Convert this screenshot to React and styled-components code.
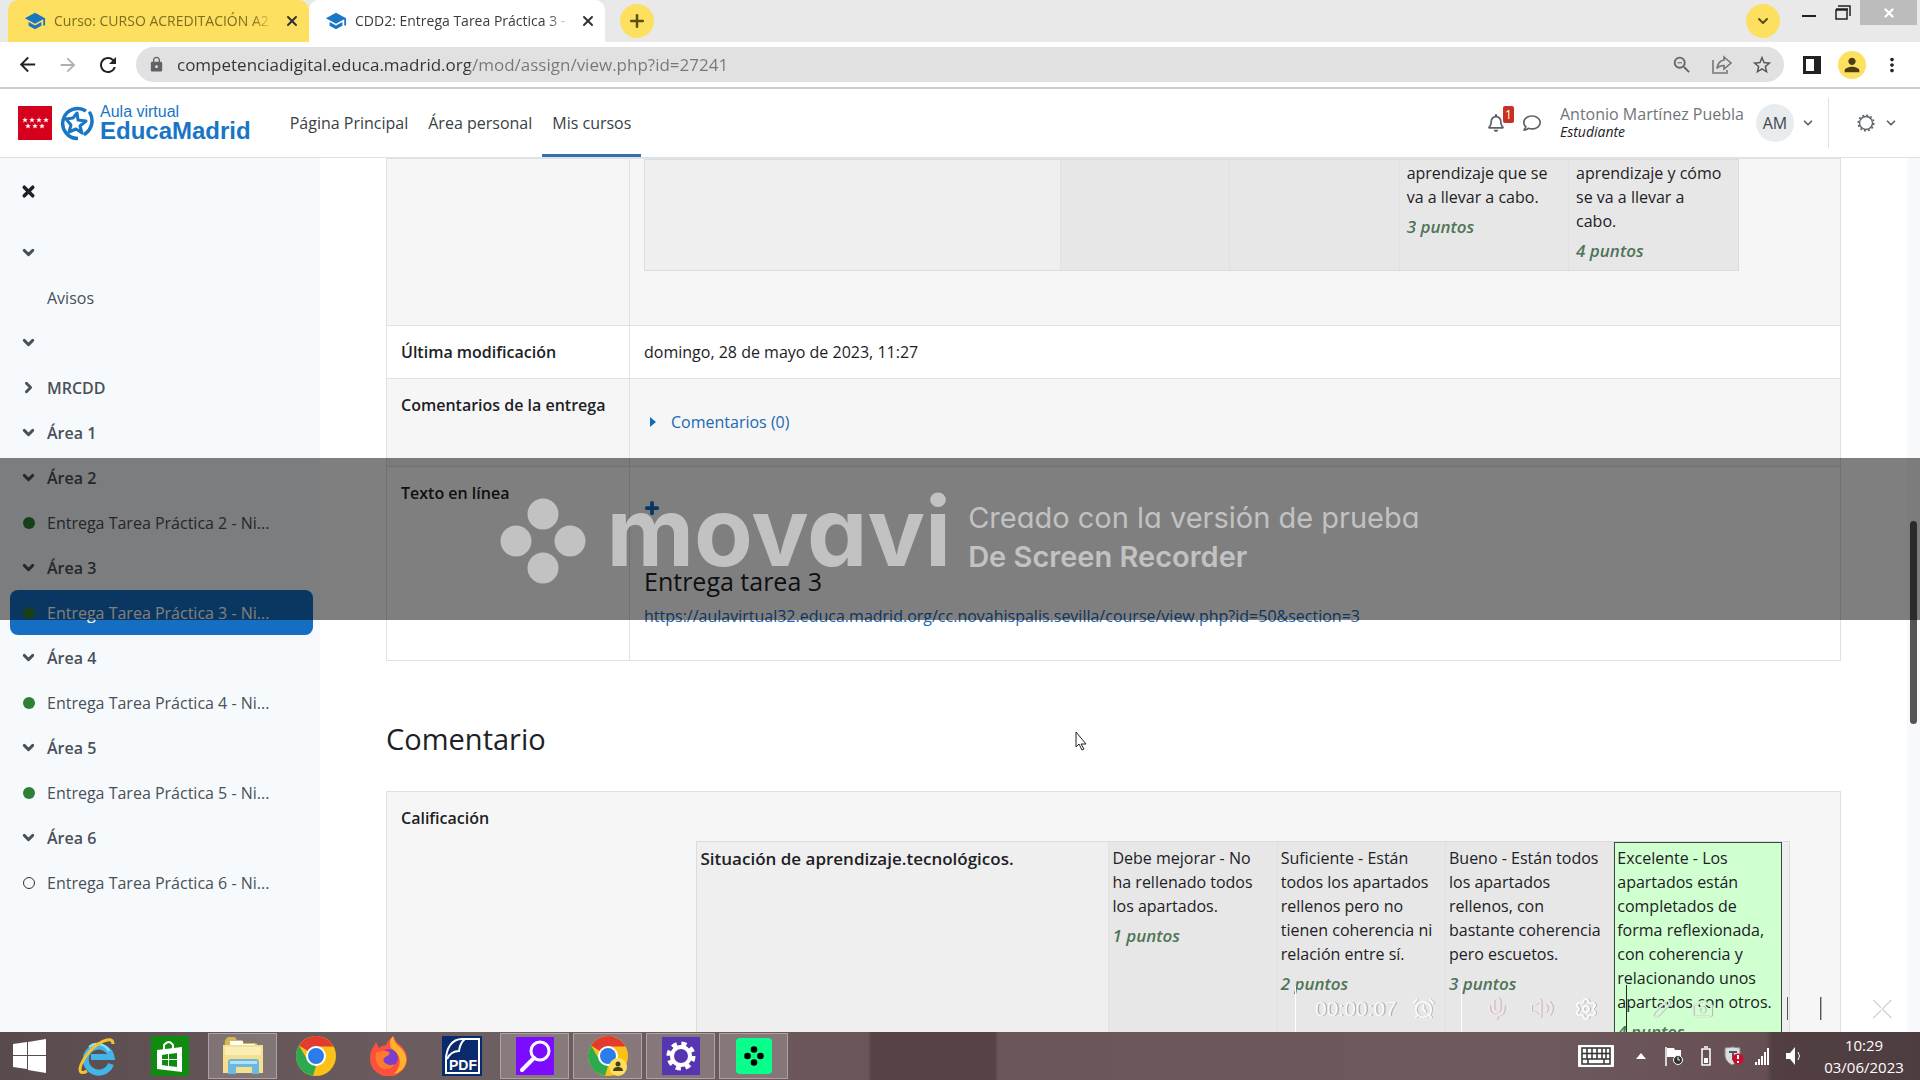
import React from "react"
import styled, { createGlobalStyle } from "styled-components"
import { ChevronDown, ChevronRight, Plus, X, Mic, Volume2, Settings, AlarmClock, Pencil, Camera } from "lucide-react"
import { MdSchool, MdLock, MdZoomOut, MdStarBorder, MdPerson, MdRefresh, MdArrowBack, MdArrowForward, MdMoreVert } from "react-icons/md"
import { FaRegBell, FaRegComment } from "react-icons/fa"

const GlobalStyle = createGlobalStyle`
  *, *::before, *::after {
    box-sizing: border-box;
  }

  body {
    margin: 0;
    background: #fff;
    color: #1d2125;
    font-family: "Open Sans", "Noto Sans", sans-serif;
    font-size: 16px;
    line-height: 24px;
  }

  button {
    font: inherit;
    color: inherit;
    background: none;
    border: 0;
    padding: 0;
    display: inline-flex;
    align-items: center;
    justify-content: center;
    cursor: pointer;
  }

  a {
    color: inherit;
    text-decoration: none;
  }

  svg {
    display: block;
    flex: none;
  }
`

const Screen = styled.div`
  position: relative;
  display: flex;
  flex-direction: column;
  height: 100vh;
  overflow: hidden;
`

/* browser */

const TabStrip = styled.div`
  display: flex;
  align-items: center;
  height: 42px;
  padding-left: 8px;
  background: #e9e9e9;
  flex: none;
`

const Tab = styled.div`
  display: flex;
  align-items: center;
  gap: 8px;
  width: ${({ $active }) => ($active ? "296px" : "301px")};
  height: 42px;
  padding: 0 7px 0 16px;
  border-radius: 10px 10px 0 0;
  background: ${({ $active }) => ($active ? "#fff" : "#fde05f")};
  color: ${({ $active }) => ($active ? "#3c3c3c" : "#7d6c22")};
  font-size: 14px;

  > svg {
    color: #1976c5;
  }
`

const TabTitle = styled.button`
  && {
    display: block;
    flex: 1;
    min-width: 0;
    overflow: hidden;
    text-align: left;
    white-space: nowrap;
    mask-image: linear-gradient(90deg, #000 90%, transparent);
  }
`

const TabClose = styled.button`
  width: 20px;
  height: 22px;
  color: #333;
`

const RoundButton = styled.button`
  width: 34px;
  height: 34px;
  border-radius: 50%;
  background: #fde05f;
  color: #5d4f14;
  margin-left: ${({ $push }) => ($push ? "auto" : "15px")};
  margin-right: ${({ $push }) => ($push ? "12px" : "0")};
`

const WindowButton = styled.button`
  align-self: flex-start;
  width: ${({ $close }) => ($close ? "57px" : "34px")};
  height: 25px;
  margin-right: ${({ $close }) => ($close ? "3px" : "0")};
  background: ${({ $close }) => ($close ? "#bcbcbc" : "none")};
  color: ${({ $close }) => ($close ? "#fff" : "#222")};
`

const Toolbar = styled.div`
  display: flex;
  align-items: center;
  height: 47px;
  padding: 0 8px 0 16px;
  border-bottom: 2px solid #ccc;
  background: #fff;
  flex: none;
`

const ToolButton = styled.button`
  width: 40px;
  height: 35px;
  color: ${({ $dim }) => ($dim ? "#b0b0b0" : "#222")};
`

const BackButton = styled(ToolButton)`
  width: 23px;
  margin-right: 9px;
`

const AddressBar = styled.div`
  display: flex;
  align-items: center;
  flex: 1;
  height: 35px;
  margin: 0 8px;
  padding: 0 2px 0 12px;
  border-radius: 18px;
  background: #e1e1e1;
  color: #5f6368;
`

const Address = styled.input`
  flex: 1;
  min-width: 0;
  margin-left: 12px;
  padding: 0;
  border: 0;
  outline: 0;
  font: 17px/24px "Open Sans", sans-serif;
  color: transparent;
  background: linear-gradient(90deg, #333 293px, #777 293px);
  background-clip: text;
  -webkit-background-clip: text;
`

const ProfileDot = styled.span`
  display: flex;
  align-items: center;
  justify-content: center;
  width: 28px;
  height: 28px;
  border-radius: 50%;
  background: #fde05f;
  color: #4a3f10;
`

/* moodle header */

const Header = styled.header`
  display: flex;
  align-items: stretch;
  height: 69px;
  padding: 0 22px 0 18px;
  border-bottom: 1px solid #dee2e6;
  background: #fff;
  flex: none;
`

const Brand = styled.a`
  display: flex;
  align-items: center;
  gap: 6px;
  margin-right: 29px;
`

const BrandText = styled.span`
  display: flex;
  flex-direction: column;
  font-family: "Liberation Sans", Arial, sans-serif;
  font-size: 16px;
  line-height: 16px;
  color: #1976c5;

  strong {
    font-size: 24px;
    line-height: 22px;
  }
`

const NavLink = styled.a`
  display: flex;
  align-items: center;
  padding: 3px 10px 0;
  border-bottom: 3px solid ${({ $active }) => ($active ? "#3570ad" : "transparent")};
  color: #3a3f44;
`

const HeaderTools = styled.div`
  display: flex;
  align-items: center;
  margin-left: auto;
  color: #5c6369;
`

const IconButton = styled.button`
  position: relative;
  width: ${({ $narrow }) => ($narrow ? "28px" : "36px")};
  height: 36px;
`

const Badge = styled.span`
  position: absolute;
  top: 1px;
  right: 0;
  width: 11px;
  height: 17px;
  border-radius: 2px;
  background: #ca3120;
  color: #fff;
  font-size: 12px;
  line-height: 17px;
`

const UserName = styled.div`
  margin: 0 12px 0 10px;
  line-height: 18px;
  color: #6f757a;

  em {
    display: block;
    font-size: 14px;
    color: #1d2125;
  }
`

const Avatar = styled.span`
  width: 38px;
  height: 38px;
  border-radius: 50%;
  background: #e9ecef;
  color: #40464c;
  line-height: 38px;
  text-align: center;
`

const SettingsMenu = styled.button`
  && {
    gap: 9px;
    height: 50px;
    margin-left: 6px;
    padding-left: 28px;
    border-left: 1px solid #dee2e6;
  }
`

/* page */

const Body = styled.div`
  display: flex;
  flex: 1;
  min-height: 0;
`

const Sidebar = styled.nav`
  width: 320px;
  flex: none;
  padding: 11px 7px 0 10px;
  background: #f7fafd;
`

const SidebarRow = styled.div`
  display: flex;
  align-items: center;
  gap: 10px;
  height: ${({ $tall }) => ($tall ? "61px" : "45px")};
  padding: ${({ $tall }) => ($tall ? "0 10px 16px" : "0 10px")};
  border-radius: 8px;
  background: ${({ $active }) => ($active ? "#146ec2" : "none")};
  color: ${({ $active }) => ($active ? "#fff" : "#495057")};
  font-weight: ${({ $section }) => ($section ? 600 : 400)};

  button {
    width: 17px;
  }

  a {
    white-space: nowrap;
  }
`

const Marker = styled.span`
  width: 17px;
  display: flex;
  justify-content: center;

  &::before {
    content: "";
    width: 12px;
    height: 12px;
    border-radius: 50%;
    border: ${({ $state }) => ($state === "todo" ? "1px solid #333" : "0")};
    background: ${({ $state }) => ($state === "done" ? "#2f8035" : "none")};
  }
`

const Main = styled.main`
  flex: 1;
  min-width: 0;
  padding: 0 66px;
  overflow: hidden;
`

const ScrollTrack = styled.div`
  display: grid;
  grid-template-rows: 363fr 204fr 308fr;
  width: 13px;
  padding: 0 3px;
  background: #f8f9fb;

  span {
    grid-row: 2;
    border-radius: 4px;
    background: #555;
  }
`

const SummaryTable = styled.table`
  width: 100%;
  border-collapse: collapse;
  table-layout: fixed;
`

const Label = styled.th`
  width: 243px;
  padding: 14px;
  border: 1px solid #dee2e6;
  border-right-width: ${({ $open }) => ($open ? 0 : "1px")};
  background: ${({ $shade }) => ($shade ? "#f6f6f6" : "#fff")};
  font-weight: 600;
  text-align: left;
  vertical-align: top;
`

const Value = styled.td`
  padding: ${({ $pad }) => $pad || "14px"};
  border: 1px solid #dee2e6;
  border-left-width: ${({ $open }) => ($open ? 0 : "1px")};
  background: ${({ $shade }) => ($shade ? "#f6f6f6" : "#fff")};
  vertical-align: top;
`

const RubricFrame = styled.div`
  margin-right: ${({ $inset }) => $inset || "0"};
  padding-right: ${({ $gutter }) => $gutter || "0"};
  border: 1px solid #dadcde;
  background: #efefef;
`

const Rubric = styled.table`
  width: 100%;
  border-collapse: collapse;
  table-layout: fixed;
`

const Criterion = styled.th`
  width: 38%;
  padding: 5px 4px;
  font-size: 17px;
  font-weight: 600;
  text-align: left;
  vertical-align: top;
`

const Level = styled.td`
  padding: ${({ $cut }) => ($cut ? "1px 14px 7px 7px" : "4px 4px 8px 3px")};
  border-left: 1px solid #e1e1e1;
  outline: ${({ $checked }) => ($checked ? "1px solid #3c4a3c" : "none")};
  outline-offset: -1px;
  background: ${({ $checked }) => ($checked ? "#d0ffd0" : "#e7e7e7")};
  vertical-align: top;
`

const Points = styled.div`
  margin-top: 6px;
  color: #4f7458;
  font-size: 17px;
  font-style: italic;
  font-weight: 600;
`

const CommentsLink = styled.a`
  display: flex;
  align-items: center;
  gap: 15px;
  margin: 17px 0 18px;
  padding-left: 6px;
  color: #2268b4;
`

const OnlineText = styled.div`
  padding: 15px 0 18px;

  h4 {
    margin: 45px 0 7px;
    font-size: 25px;
    line-height: 32px;
    font-weight: 400;
  }

  a {
    color: #2268b4;
  }
`

const ExpandButton = styled.button`
  && {
    display: flex;
    width: 16px;
    height: 24px;
    color: #0f6cbf;
  }
`

const Heading = styled.h3`
  margin: 58px 0 32px;
  font-size: 29px;
  line-height: 40px;
  font-weight: 400;
`

/* recorder */

const Watermark = styled.div`
  position: absolute;
  left: 0;
  right: 0;
  top: 42.4%;
  height: 15%;
  display: flex;
  align-items: center;
  justify-content: center;
  padding-top: 5px;
  background: rgba(0, 0, 0, 0.5);
  color: #c2c2c2;
  font-family: Inter, sans-serif;
  pointer-events: none;
`

const Wordmark = styled.span`
  margin: 0 17px 20px 20px;
  font-size: 96px;
  line-height: 96px;
  font-weight: 700;
  font-feature-settings: "cv11";
`

const Trial = styled.div`
  margin-bottom: 9px;
  font-size: 29px;
  line-height: 39px;
  font-feature-settings: "cv11";

  strong {
    display: block;
    font-weight: 600;
  }
`

const RecorderBar = styled.div`
  position: absolute;
  right: 0;
  bottom: 48px;
  display: flex;
  align-items: center;
  width: 625px;
  height: 47px;
  color: #fafafa;
  pointer-events: none;

  svg {
    filter: drop-shadow(1px 0 0 #b5b5b5);
  }
`

const Timer = styled.span`
  width: 114px;
  padding-left: 19px;
  border-left: 1px solid #fff;
  font-family: "Liberation Sans", Arial, sans-serif;
  font-size: 21px;
  line-height: 46px;
  text-shadow: 1px 0 0 #999;
`

const RecorderGroup = styled.span`
  display: flex;
  align-items: center;
  gap: 20px;
  height: ${({ $short }) => ($short ? "23px" : "47px")};
  margin-left: ${({ $gap }) => $gap};
  padding-left: ${({ $pad }) => $pad || "0"};
  border-left: 1px solid ${({ $line }) => $line || "transparent"};
  color: ${({ $color }) => $color || "inherit"};
`

const Pointer = styled.svg`
  position: absolute;
  left: 56%;
  top: 67.7%;
`

/* windows taskbar */

const Taskbar = styled.footer`
  position: relative;
  display: flex;
  align-items: center;
  height: 48px;
  flex: none;
  background: linear-gradient(90deg, #594b4d 0, #66585a 15%, #6d5f61 25%, #6b5659 45.2%, #574346 45.4%, #574346 51.8%, #6b5659 52%, #6e595c 80%, #654f52 92%, #513f42 92.3%, #4e3d40 100%);
  color: #fff;
`

const StartButton = styled.button`
  width: 59px;
  height: 48px;
  margin-right: 3px;
`

const TaskButton = styled.button`
  && {
    width: 69px;
    height: 46px;
    margin-right: 4px;
    border: 1px solid ${({ $open }) => ($open ? "#aea2a4" : "transparent")};
    background: ${({ $open }) => ($open ? "rgba(255, 255, 255, 0.18)" : "none")};
  }
`

const Tray = styled.div`
  display: flex;
  align-items: center;
  margin-left: auto;
`

const TrayButton = styled.button`
  width: ${({ $width }) => $width || "30px"};
  height: 48px;
`

const Clock = styled.div`
  width: 112px;
  font-size: 15px;
  line-height: 22px;
  text-align: center;
`

const WindowsLogo = () => (
  <svg width="33" height="34" viewBox="0 0 33 34" fill="#fff">
    <path d="M0 5l14-2v13H0zM15 3l18-3v16H15zM0 17h14v13L0 28zM15 17h18v17l-18-3z" />
  </svg>
)

const ExplorerE = () => (
  <svg width="40" height="40" viewBox="0 0 40 40" fill="none">
    <path d="M34 28a13 13 0 1 1 .500-7H14" stroke="#43b4e8" strokeWidth="6" />
    <path d="M12 11a13 13 0 0 1 20 4" stroke="#9be0fa" strokeWidth="2" />
    <path d="M36 8C36-2 18 7 9 20S2 40 10 35" stroke="#f4c430" strokeWidth="3" />
  </svg>
)

const Store = () => (
  <svg width="38" height="40" viewBox="0 0 38 40">
    <path fill="#108a10" d="M0 0h38v40H0z" />
    <path d="M13 14V9q5-6 9 0v4" fill="none" stroke="#fff" strokeWidth="2" />
    <path fill="#fff" d="M6 14l25-3v25L6 33z" />
    <path fill="#108a10" d="M11 19l6-1v5h-6zM18 18l8-1v6h-8zM11 24h6v6l-6-1zM18 24h8v7l-8-1z" />
  </svg>
)

const Folder = () => (
  <svg width="42" height="40" viewBox="0 0 42 40">
    <path fill="#d9b552" d="M3 4l3-3h7l2 3h5l2 3h12l3 3v8H2z" />
    <path fill="#fff" d="M8 5h13v3h12v4H8z" />
    <path fill="#f6e08e" d="M1 9h40v28H1z" />
    <path fill="#fbeeb4" d="M3 11h36v8H3z" />
    <path fill="#6bb9e0" d="M6 26q0-3 3-3h25q3 0 3 3v12h-7v-7H14v7H6z" />
    <path fill="#b5e0f3" d="M8 25h27v3H8z" />
  </svg>
)

const Chrome = ({ user }) => (
  <svg width="40" height="40" viewBox="0 0 40 40">
    <circle cx="20" cy="20" r="20" fill="#fbc116" />
    <path fill="#e33b2e" d="M20 20L3 9.500A20 20 0 0 1 37.500 10.500H20z" />
    <path fill="#2da94f" d="M3 9.500L12 25l8 5-3 9.800A20 20 0 0 1 3 9.500z" />
    <circle cx="20" cy="20" r="10" fill="#fff" />
    <circle cx="20" cy="20" r="8" fill="#2b7de9" />
    {user && (
      <g>
        <circle cx="30" cy="31" r="9" fill="#fde05f" />
        <circle cx="30" cy="28" r="2.500" fill="#4a3f10" />
        <path d="M25 35q0-4 5-4t5 4z" fill="#4a3f10" />
      </g>
    )}
  </svg>
)

const Firefox = () => (
  <svg width="40" height="40" viewBox="0 0 40 40">
    <path fill="#ff4f3d" d="M5 10l2-4 3 6q3-3 7-3 3-7 8-9 1 6 6 9 7 6 7 14a18 17 0 0 1-37 0Q1 15 5 10z" />
    <path fill="#ffb22b" d="M24 0q1 7 7 11 8 8 6 16-3 9-12 11 8-8 5-17-3-6-8-9-3-6 2-12z" />
    <circle cx="20" cy="22" r="9" fill="#7b3fc9" />
    <path fill="#ff7a2f" d="M7 17q6-4 13-1 2 2-2 4-5 2-3 6 4 5 11 2-6 8-14 4-7-5-5-15z" />
  </svg>
)

const PdfIcon = () => (
  <svg width="40" height="40" viewBox="0 0 40 40">
    <path fill="#0a2a6e" d="M0 0h40v40H0z" />
    <path d="M4 37V24C4 12 10 3 20 3h17v34z" fill="none" stroke="#fff" strokeWidth="2" />
    <path d="M5 23q4-8 12-8 1-8 6-12" fill="none" stroke="#fff" strokeWidth="2" />
    <text x="7" y="34" fill="#fff" fontFamily="Liberation Sans" fontWeight="700" fontSize="14">PDF</text>
  </svg>
)

const Magnifier = () => (
  <svg width="38" height="38" viewBox="0 0 38 38">
    <path fill="#7c0cff" d="M0 0h38v38H0z" />
    <circle cx="24" cy="14" r="9" fill="none" stroke="#fff" strokeWidth="3" />
    <path d="M18 21L6 33" stroke="#fff" strokeWidth="4" strokeLinecap="round" />
  </svg>
)

const GearTile = () => (
  <svg width="38" height="38" viewBox="0 0 38 38">
    <path fill="#5635b0" d="M0 0h38v38H0z" />
    <circle cx="19" cy="19" r="9" fill="none" stroke="#fff" strokeWidth="4" />
    <circle cx="19" cy="19" r="12" fill="none" stroke="#fff" strokeWidth="5" strokeDasharray="5 4.425" />
  </svg>
)

const MovaviTile = () => (
  <svg width="36" height="36" viewBox="0 0 36 36">
    <rect width="36" height="36" rx="4" fill="#08ff8c" />
    <circle cx="18" cy="11.500" r="3.300" />
    <circle cx="11.500" cy="18" r="3.300" />
    <circle cx="24.500" cy="18" r="3.300" />
    <circle cx="18" cy="24.500" r="3.300" />
  </svg>
)

const MovaviLogo = () => (
  <svg width="86" height="86" viewBox="0 0 86 86" fill="#c2c2c2">
    <circle cx="43" cy="16" r="15.500" />
    <circle cx="16" cy="43" r="15.500" />
    <circle cx="70" cy="43" r="15.500" />
    <circle cx="43" cy="70" r="15.500" />
  </svg>
)

const MadridFlag = () => (
  <svg width="34" height="34" viewBox="0 0 34 34">
    <path fill="#d5001c" d="M0 0h34v34H0z" />
    {[[7, 14], [14, 14], [21, 14], [28, 14], [10, 20], [17, 20], [24, 20]].map(([x, y]) => (
      <path key={`${x}-${y}`} transform={`translate(${x} ${y}) scale(.8)`} fill="#fff" d="M0-3.500l1 2.500h2.500l-2 1.500 1 2.500L0 1.500-2.500 3l1-2.500-2-1.500H-1z" />
    ))}
  </svg>
)

const EducaLogo = () => (
  <svg width="36" height="36" viewBox="0 0 36 36" fill="none" stroke="#1976c5">
    <path d="M28 6A15 15 0 1 0 20 33.500" strokeWidth="3.500" />
    <path d="M27 29c7-5 9-14 5-21" strokeWidth="3.500" strokeLinecap="round" />
    <path d="M19 8l1 7 8 1-6 5 2 7-6-4-7 3 2-7-5-6 7-1z" strokeWidth="3" strokeLinejoin="round" />
  </svg>
)

const ShareIcon = () => (
  <svg width="20" height="20" viewBox="0 0 20 20" fill="none" stroke="#777" strokeWidth="1.600">
    <path d="M1 5v13h14v-3" />
    <path d="M12 2l7 6-7 6v-3.500q-5 0-7 3 1-7.500 7-8.500z" />
  </svg>
)

const GearIcon = () => (
  <svg width="18" height="18" viewBox="0 0 18 18" fill="none" stroke="#5c6369">
    <circle cx="9" cy="9" r="6.500" strokeWidth="1.400" />
    <circle cx="9" cy="9" r="7.800" strokeWidth="1.600" strokeDasharray="2 2.084" />
  </svg>
)

const sections = [
  { type: "section" },
  { type: "item", text: "Avisos" },
  { type: "section" },
  { type: "section", text: "MRCDD", closed: true },
  { type: "section", text: "Área 1" },
  { type: "section", text: "Área 2" },
  { type: "item", text: "Entrega Tarea Práctica 2 - Ni...", state: "done" },
  { type: "section", text: "Área 3" },
  { type: "item", text: "Entrega Tarea Práctica 3 - Ni...", state: "done", active: true },
  { type: "section", text: "Área 4" },
  { type: "item", text: "Entrega Tarea Práctica 4 - Ni...", state: "done" },
  { type: "section", text: "Área 5" },
  { type: "item", text: "Entrega Tarea Práctica 5 - Ni...", state: "done" },
  { type: "section", text: "Área 6" },
  { type: "item", text: "Entrega Tarea Práctica 6 - Ni...", state: "todo" },
]

const planning = [
  {},
  {},
  { text: "aprendizaje que se va a llevar a cabo.", points: 3 },
  { text: "aprendizaje y cómo se va a llevar a cabo.", points: 4 },
]

const situation = [
  { text: "Debe mejorar - No ha rellenado todos los apartados.", points: 1 },
  { text: "Suficiente - Están todos los apartados rellenos pero no tienen coherencia ni relación entre sí.", points: 2 },
  { text: "Bueno - Están todos los apartados rellenos, con bastante coherencia pero escuetos.", points: 3 },
  {
    text: "Excelente - Los apartados están completados de forma reflexionada, con coherencia y relacionando unos apartados con otros.",
    points: 4,
    checked: true,
  },
]

const tasks = [
  { name: "Internet Explorer", icon: <ExplorerE /> },
  { name: "Tienda", icon: <Store /> },
  { name: "Explorador de archivos", icon: <Folder />, open: true },
  { name: "Chrome", icon: <Chrome /> },
  { name: "Firefox", icon: <Firefox /> },
  { name: "PDF", icon: <PdfIcon /> },
  { name: "Lupa", icon: <Magnifier />, open: true },
  { name: "Chrome, perfil", icon: <Chrome user />, open: true },
  { name: "Configuración", icon: <GearTile />, open: true },
  { name: "Movavi", icon: <MovaviTile />, open: true },
]

const RubricTable = ({ title, levels, inset, gutter, cut }) => (
  <RubricFrame $inset={inset} $gutter={gutter}>
    <Rubric>
      <tbody>
        <tr>
          <Criterion>{title}</Criterion>
          {levels.map(({ text, points, checked }, i) => (
            <Level key={i} $checked={checked} $cut={cut}>
              {text}
              {points && <Points>{points} puntos</Points>}
            </Level>
          ))}
        </tr>
      </tbody>
    </Rubric>
  </RubricFrame>
)

const Browser = () => (
  <>
    <TabStrip>
      <Tab>
        <MdSchool size={22} />
        <TabTitle>Curso: CURSO ACREDITACIÓN A2</TabTitle>
        <TabClose aria-label="Cerrar"><X size={16} strokeWidth={3} /></TabClose>
      </Tab>
      <Tab $active>
        <MdSchool size={22} />
        <TabTitle>CDD2: Entrega Tarea Práctica 3 -</TabTitle>
        <TabClose aria-label="Cerrar"><X size={16} strokeWidth={3} /></TabClose>
      </Tab>
      <RoundButton aria-label="Nueva pestaña"><Plus size={20} strokeWidth={3} /></RoundButton>
      <RoundButton $push aria-label="Buscar pestañas"><ChevronDown size={16} strokeWidth={3} /></RoundButton>
      <WindowButton aria-label="Minimizar">
        <svg width="14" height="10"><path d="M0 7h14v2H0z" fill="#222" /></svg>
      </WindowButton>
      <WindowButton aria-label="Restaurar">
        <svg width="16" height="15" fill="none" stroke="#222"><path d="M1 5h11v9H1zM3 1h12v10M1 4h12" strokeWidth="1.500" /></svg>
      </WindowButton>
      <WindowButton $close aria-label="Cerrar ventana"><X size={14} strokeWidth={4} /></WindowButton>
    </TabStrip>
    <Toolbar>
      <BackButton aria-label="Atrás"><MdArrowBack size={23} /></BackButton>
      <ToolButton $dim aria-label="Adelante"><MdArrowForward size={22} /></ToolButton>
      <ToolButton aria-label="Recargar"><MdRefresh size={24} /></ToolButton>
      <AddressBar>
        <MdLock size={17} />
        <Address aria-label="Dirección" defaultValue="competenciadigital.educa.madrid.org/mod/assign/view.php?id=27241" />
        <ToolButton aria-label="Zoom"><MdZoomOut size={22} color="#666" /></ToolButton>
        <ToolButton aria-label="Compartir"><ShareIcon /></ToolButton>
        <ToolButton aria-label="Favorito"><MdStarBorder size={22} color="#555" /></ToolButton>
      </AddressBar>
      <ToolButton aria-label="Panel lateral">
        <svg width="18" height="18"><path d="M0 0h18v18H0zM3 3v12h8V3z" fill="#222" fillRule="evenodd" /></svg>
      </ToolButton>
      <ToolButton aria-label="Perfil"><ProfileDot><MdPerson size={22} /></ProfileDot></ToolButton>
      <ToolButton aria-label="Menú"><MdMoreVert size={22} /></ToolButton>
    </Toolbar>
  </>
)

const SiteHeader = () => (
  <Header>
    <Brand href="#">
      <MadridFlag />
      <EducaLogo />
      <BrandText>Aula virtual<strong>EducaMadrid</strong></BrandText>
    </Brand>
    <NavLink href="#">Página Principal</NavLink>
    <NavLink href="#">Área personal</NavLink>
    <NavLink href="#" $active>Mis cursos</NavLink>
    <HeaderTools>
      <IconButton aria-label="Notificaciones"><FaRegBell size={18} /><Badge>1</Badge></IconButton>
      <IconButton aria-label="Mensajes"><FaRegComment size={18} /></IconButton>
      <UserName>Antonio Martínez Puebla<em>Estudiante</em></UserName>
      <Avatar>AM</Avatar>
      <IconButton $narrow aria-label="Menú de usuario"><ChevronDown size={14} strokeWidth={3} /></IconButton>
      <SettingsMenu aria-label="Ajustes"><GearIcon /><ChevronDown size={14} strokeWidth={3} /></SettingsMenu>
    </HeaderTools>
  </Header>
)

const CourseIndex = () => (
  <Sidebar>
    <SidebarRow $tall>
      <button aria-label="Cerrar índice"><X size={17} strokeWidth={5} color="#1d2125" /></button>
    </SidebarRow>
    {sections.map(({ type, text, closed, state, active }, i) => (
      <SidebarRow key={i} $section={type === "section"} $active={active}>
        {type === "section" ? (
          <button aria-label="Desplegar">
            {closed ? <ChevronRight size={17} strokeWidth={4} /> : <ChevronDown size={17} strokeWidth={4} />}
          </button>
        ) : (
          <Marker $state={state} />
        )}
        {text && <a href="#">{text}</a>}
      </SidebarRow>
    ))}
  </Sidebar>
)

const App = () => (
  <Screen>
    <GlobalStyle />
    <Browser />
    <SiteHeader />
    <Body>
      <CourseIndex />
      <Main>
        <SummaryTable>
          <tbody>
            <tr>
              <Label $shade />
              <Value $shade $pad="0 14px 54px">
                <RubricTable levels={planning} inset="87px" cut />
              </Value>
            </tr>
            <tr>
              <Label>Última modificación</Label>
              <Value>domingo, 28 de mayo de 2023, 11:27</Value>
            </tr>
            <tr>
              <Label $shade>Comentarios de la entrega</Label>
              <Value $shade>
                <CommentsLink href="#">
                  <svg width="6" height="10"><path d="M0 0l6 5-6 5z" fill="#0f6cbf" /></svg>
                  Comentarios (0)
                </CommentsLink>
              </Value>
            </tr>
            <tr>
              <Label>Texto en línea</Label>
              <Value>
                <OnlineText>
                  <ExpandButton aria-label="Ver completo"><Plus size={18} strokeWidth={5} /></ExpandButton>
                  <h4>Entrega tarea 3</h4>
                  <a href="#">https://aulavirtual32.educa.madrid.org/cc.novahispalis.sevilla/course/view.php?id=50&amp;section=3</a>
                </OnlineText>
              </Value>
            </tr>
          </tbody>
        </SummaryTable>
        <Heading>Comentario</Heading>
        <SummaryTable>
          <tbody>
            <tr>
              <Label $shade $open>Calificación</Label>
              <Value $shade $open $pad="49px 50px 54px 66px">
                <RubricTable title="Situación de aprendizaje.tecnológicos." levels={situation} gutter="7px" />
              </Value>
            </tr>
          </tbody>
        </SummaryTable>
      </Main>
      <ScrollTrack><span /></ScrollTrack>
    </Body>
    <Taskbar>
      <StartButton aria-label="Inicio"><WindowsLogo /></StartButton>
      {tasks.map(({ name, icon, open }) => (
        <TaskButton key={name} $open={open} aria-label={name}>{icon}</TaskButton>
      ))}
      <Tray>
        <TrayButton $width="60px" aria-label="Teclado">
          <svg width="38" height="24" viewBox="0 0 38 24">
            <rect x="1" y="1" width="36" height="22" rx="1" fill="#fff" />
            <path d="M5 4h28v16H5zM5 9.500h28M5 15h28M10 4v11M15 4v11M20 4v11M25 4v11M29 4v11M11 15v5M27 15v5" fill="none" stroke="#333" strokeWidth="1.500" />
          </svg>
        </TrayButton>
        <TrayButton aria-label="Iconos ocultos"><svg width="10" height="6"><path d="M0 6l5-6 5 6z" fill="#fff" /></svg></TrayButton>
        <TrayButton $width="36px" aria-label="Centro de actividades">
          <svg width="18" height="20" viewBox="0 0 18 20">
            <path d="M1 1v19" stroke="#fff" strokeWidth="1.500" />
            <path d="M2 2h7l1 2h6v9h-6l-1-2H2z" fill="#fff" />
            <circle cx="13" cy="14" r="4.500" fill="#333" stroke="#fff" />
            <path d="M13 11v3h2" fill="none" stroke="#fff" />
          </svg>
        </TrayButton>
        <TrayButton $width="28px" aria-label="Batería">
          <svg width="10" height="20"><path d="M1 3h8v16H1zM3 1h4" fill="none" stroke="#fff" strokeWidth="1.500" /><path d="M3 12h4v5H3z" fill="#fff" /></svg>
        </TrayButton>
        <TrayButton $width="28px" aria-label="Antivirus">
          <svg width="20" height="20" viewBox="0 0 20 20">
            <path d="M1 2q8-2 15 0v8q-1 6-8 9-6-3-7-9z" fill="#ddd" stroke="#888" />
            <path d="M5 6h8M9 6v8" stroke="#555" strokeWidth="2" />
            <circle cx="14" cy="13" r="5.500" fill="#c8102e" />
            <path d="M14 9v4M14 15v2" stroke="#fff" strokeWidth="2" />
          </svg>
        </TrayButton>
        <TrayButton aria-label="Red">
          <svg width="16" height="18" fill="#fff"><path d="M0 15h2v3H0zM3 12h2v6H3zM6 9h2v9H6zM9 5h2v13H9zM12 1h2v17h-2z" /></svg>
        </TrayButton>
        <TrayButton aria-label="Volumen">
          <svg width="17" height="20" viewBox="0 0 17 20"><path d="M1 7h4l5-6v18l-5-6H1z" fill="#fff" /><path d="M13 6q3 4 0 8" fill="none" stroke="#fff" /></svg>
        </TrayButton>
        <Clock>10:29<br />03/06/2023</Clock>
      </Tray>
    </Taskbar>
    <RecorderBar>
      <Timer>00:00:07</Timer>
      <RecorderGroup $gap="2px"><AlarmClock size={23} /></RecorderGroup>
      <RecorderGroup $gap="26px" $pad="22px" $line="#fff" $color="#f6e6e8">
        <Mic size={25} />
        <Volume2 size={25} />
        <Settings size={24} color="#fafafa" />
      </RecorderGroup>
      <RecorderGroup $gap="28px" $pad="24px" $line="#1b2b1b" $color="#d9f5d9">
        <Pencil size={20} />
        <Camera size={22} />
      </RecorderGroup>
      <RecorderGroup $short $gap="74px" $pad="32px" $line="#556"><svg width="1" height="23"><path d="M0 0h1v23H0z" fill="#556" /></svg></RecorderGroup>
      <RecorderGroup $gap="42px"><X size={34} strokeWidth={1} /></RecorderGroup>
    </RecorderBar>
    <Watermark>
      <MovaviLogo />
      <Wordmark>movavi</Wordmark>
      <Trial>Creado con la versión de prueba<strong>De Screen Recorder</strong></Trial>
    </Watermark>
    <Pointer width="12" height="20" viewBox="0 0 12 20">
      <path d="M1 1v15l3-3 3 6 2-1-3-5h5z" fill="#fff" stroke="#222" />
    </Pointer>
  </Screen>
)

export default App
